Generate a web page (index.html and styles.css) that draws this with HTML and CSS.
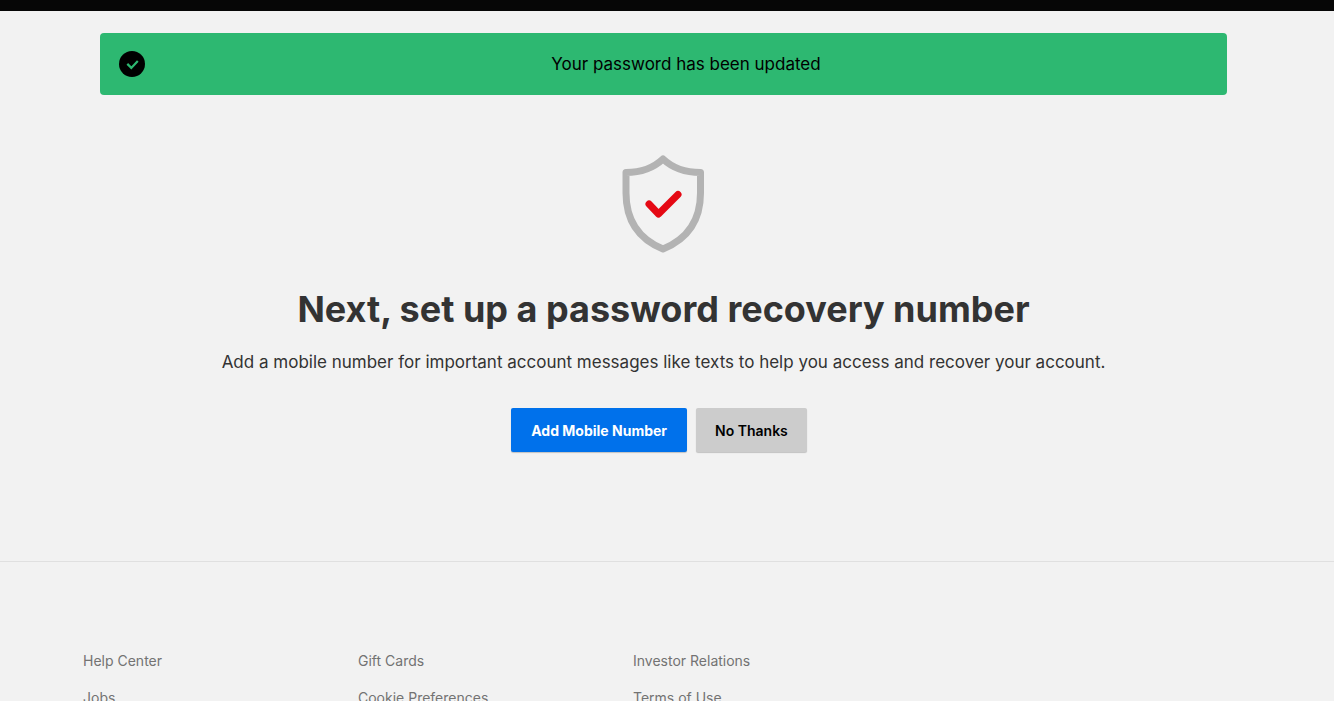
FILE: index.html
```html
<!DOCTYPE html>
<html lang="en">
<head>
    <meta charset="UTF-8">
    <meta name="viewport" content="width=device-width, initial-scale=1.0">
    <title>Password updated</title>
    <link rel="stylesheet" href="styles.css">
</head>
<body>
    <header class="topbar"></header>

    <main class="content">
        <div class="alert" role="status">
            <svg class="alert-icon" viewBox="0 0 26 26" aria-hidden="true">
                <circle cx="13" cy="13" r="13" fill="#000"/>
                <path d="M8.3 12.9l4 4 6.500-6.900" fill="none" stroke="#2db871" stroke-width="2.200"/>
            </svg>
            <p class="alert-text">Your password has been updated</p>
        </div>

        <section class="recovery">
            <svg class="shield" viewBox="0 0 83 100" aria-hidden="true">
                <path d="M41 5C32 13.500 19 18.500 4 18.500V39C4 69 19 86 41 95C63 86 78.500 69 78.500 39V18.500C63 18.500 50 13.500 41 5Z" fill="none" stroke="#b3b3b3" stroke-width="7" stroke-linejoin="round"/>
                <path d="M27 50L36.500 60L56 40.500" fill="none" stroke="#e50914" stroke-width="7" stroke-linecap="round" stroke-linejoin="round"/>
            </svg>
            <h1>Next, set up a password recovery number</h1>
            <p class="intro">Add a mobile number for important account messages like texts to help you access and recover your account.</p>
            <div class="actions">
                <button type="button" class="btn primary">Add Mobile Number</button>
                <button type="button" class="btn secondary">No Thanks</button>
            </div>
        </section>
    </main>

    <footer class="footer">
        <ul class="footer-links">
            <li><a href="#">Help Center</a></li>
            <li><a href="#">Gift Cards</a></li>
            <li><a href="#">Investor Relations</a></li>
            <li><a href="#">Jobs</a></li>
            <li><a href="#">Cookie Preferences</a></li>
            <li><a href="#">Terms of Use</a></li>
        </ul>
    </footer>
</body>
</html>
```

FILE: styles.css
```css
* {
    box-sizing: border-box;
}

body {
    margin: 0;
    background: #f2f2f2;
    color: #333;
    font-family: Inter, Roboto, "Liberation Sans", sans-serif;
}

.topbar {
    height: 11px;
    background: #060606;
}

.content {
    padding: 22px 107px 109px 100px;
}

/* Success message */
.alert {
    display: flex;
    align-items: center;
    padding: 18px 0 18px 19px;
    border-radius: 4px;
    background: #2db871;
    color: #000;
}

.alert-icon {
    width: 26px;
    height: 26px;
}

.alert-text {
    flex: 1;
    margin: 0;
    text-align: center;
    font-size: 17px;
    line-height: 26px;
}

.recovery {
    display: flex;
    flex-direction: column;
    align-items: center;
    padding-top: 59px;
    text-align: center;
}

.shield {
    width: 83px;
    height: 100px;
}

h1 {
    margin: 31px 0 0;
    font-size: 36px;
    font-weight: 700;
    line-height: 48px;
}

.intro {
    margin: 17px 0 0;
    font-size: 17px;
    line-height: 24px;
}

/* Buttons */
.actions {
    display: flex;
    margin-top: 34px;
}

.btn {
    height: 44px;
    margin-right: 9px;
    padding: 0 19px;
    border: none;
    border-radius: 2px;
    font-family: inherit;
    font-size: 14px;
    font-weight: 600;
    box-shadow: 0 1px 1px rgba(0, 0, 0, 0.2);
    cursor: pointer;
}

.primary {
    padding: 0 20px;
    background: #0071eb;
    color: #fff;
    font-weight: 700;
}

.secondary {
    background: #ccc;
    color: #000;
}

/* Footer */
.footer {
    padding: 89px 83px 0;
    border-top: 1px solid #e0e0e0;
}

.footer-links {
    display: grid;
    grid-template-columns: repeat(3, 1fr);
    row-gap: 17px;
    max-width: 825px;
    margin: 0;
    padding: 0;
    list-style: none;
    font-size: 14px;
    line-height: 20px;
}

.footer-links a {
    color: #737373;
    text-decoration: none;
}
```
